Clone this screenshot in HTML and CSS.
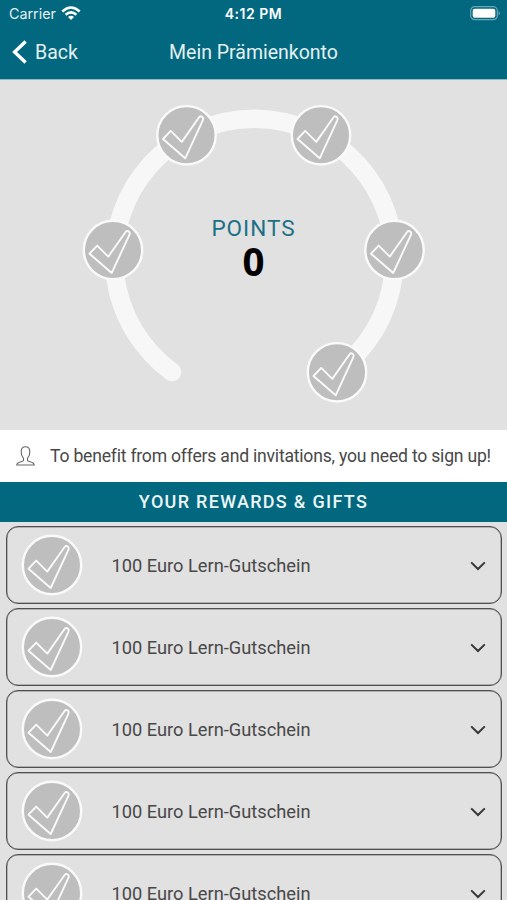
FILE: index.html
```
<!DOCTYPE html>
<html lang="en">
<head>
<meta charset="utf-8">
<title>Mein Prämienkonto</title>
<link rel="stylesheet" href="styles.css">
</head>
<body>
<svg class="defs" aria-hidden="true">
  <symbol id="badge" viewBox="-31 -31 62 62">
    <circle r="29.2" fill="#bebebe" stroke="#fafafa" stroke-width="2.4"/>
    <path d="M-23.5 3.7L-15.8-4.4L-4.7 6.6L12.6-18Q14-19.7 15.8-18.4Q17.3-17.2 16.5-15.4L-1.3 23Z" fill="none" stroke="#fafafa" stroke-width="1.9" stroke-linejoin="round"/>
  </symbol>
  <symbol id="chevron" viewBox="0 0 16 10">
    <path d="M1.2 1.4L8 8L14.8 1.4" fill="none" stroke="#363636" stroke-width="2"/>
  </symbol>
</svg>
<header class="top">
  <div class="status">
    <span class="carrier">Carrier
      <svg width="20" height="15" viewBox="0 0 20 15" fill="none" stroke="#fff" stroke-width="2.6"><path d="M1.3 5.5Q10-2.5 18.7 5.5M4.6 8.8Q10 4.1 15.4 8.8"/><path d="M7 11Q10 8.5 13 11L10 14Z" fill="#fff" stroke="none"/></svg>
    </span>
    <span class="time">4:12 PM</span>
    <svg class="battery" width="31" height="15" viewBox="0 0 31 15"><rect x=".7" y=".7" width="26.6" height="13" rx="4" fill="none" stroke="#6ba7b7" stroke-width="1.2"/><rect x="2.7" y="2.7" width="22.6" height="9" rx="2" fill="#fff"/><path d="M28.6 4.8Q31.2 7.2 28.6 9.6Z" fill="#6ba7b7"/></svg>
  </div>
  <nav class="nav">
    <span class="back"><svg width="16" height="24" viewBox="0 0 16 24"><path d="M13.6 1.5L2.6 12L13.6 22.5" fill="none" stroke="#fff" stroke-width="3.4"/></svg>Back</span>
    <h1>Mein Prämienkonto</h1>
  </nav>
</header>
<section class="gauge">
  <svg class="ring" width="507" height="350" viewBox="0 80 507 350">
    <path d="M172 372A140 140 0 1 1 336.500 372" fill="none" stroke="#f7f7f7" stroke-width="18.600" stroke-linecap="round"/>
    <use href="#badge" x="155.500" y="104.300" width="62" height="62"/>
    <use href="#badge" x="290" y="104.300" width="62" height="62"/>
    <use href="#badge" x="82" y="219" width="62" height="62"/>
    <use href="#badge" x="363.500" y="219" width="62" height="62"/>
    <use href="#badge" x="306" y="341.300" width="62" height="62"/>
  </svg>
  <div class="score"><span class="label">POINTS</span><strong>0</strong></div>
</section>
<section class="notice">
  <svg width="19" height="20" viewBox="0 0 19 20" fill="none" stroke="#686868" stroke-width="1.100" stroke-linejoin="round"><path d="M7.500 12.300C5.500 10 5 7.500 5.200 5.200C5.500-.7 13.500-.7 13.800 5.200C14 7.500 13.500 10 11.500 12.300V14.500C12.200 16 18.300 15.500 18.300 19H.7C.7 15.500 6.800 16 7.500 14.500Z"/></svg>
  <p>To benefit from offers and invitations, you need to sign up!</p>
</section>
<h2>YOUR REWARDS &amp; GIFTS</h2>
<main class="rewards">
  <article class="reward"><svg class="badge"><use href="#badge"/></svg><span>100 Euro Lern-Gutschein</span><svg class="chevron"><use href="#chevron"/></svg></article>
  <article class="reward"><svg class="badge"><use href="#badge"/></svg><span>100 Euro Lern-Gutschein</span><svg class="chevron"><use href="#chevron"/></svg></article>
  <article class="reward"><svg class="badge"><use href="#badge"/></svg><span>100 Euro Lern-Gutschein</span><svg class="chevron"><use href="#chevron"/></svg></article>
  <article class="reward"><svg class="badge"><use href="#badge"/></svg><span>100 Euro Lern-Gutschein</span><svg class="chevron"><use href="#chevron"/></svg></article>
  <article class="reward"><svg class="badge"><use href="#badge"/></svg><span>100 Euro Lern-Gutschein</span><svg class="chevron"><use href="#chevron"/></svg></article>
</main>
</body>
</html>
```
FILE: styles.css
```
* { box-sizing: border-box; }
body {
  margin: 0;
  height: 900px;
  overflow: hidden;
  display: flex;
  flex-direction: column;
  background: #e1e1e1;
  color: #484848;
  font-family: Roboto, sans-serif;
}
body > * { flex-shrink: 0; }
svg { display: block; }
h1, h2, p { margin: 0; font-weight: 400; }
.defs { position: absolute; width: 0; height: 0; }
.top {
  height: 80px;
  background: #02687f;
  border-bottom: 1px solid #8fb9c4;
  color: #e5f0f2;
}
.status {
  height: 27px;
  padding: 0 6px 0 9px;
  display: grid;
  grid-template-columns: 1fr auto 1fr;
  align-items: center;
  font-family: Inter, sans-serif;
  font-size: 14px;
}
.carrier { display: flex; align-items: center; gap: 5px; font-size: 14.3px; }
.time { font-weight: 600; color: #fff; letter-spacing: .5px; padding-right: 3px; white-space: nowrap; }
.battery { justify-self: end; }
.nav {
  height: 51px;
  padding: 0 13px;
  display: grid;
  grid-template-columns: 1fr auto 1fr;
  align-items: center;
}
.back { display: flex; align-items: center; gap: 6px; font-size: 19.5px; }
.back svg { margin: -2px 1px 0 -1px; }
h1 { font-size: 19.5px; }
.gauge { height: 350px; display: grid; }
.ring, .score { grid-area: 1 / 1; }
.score {
  display: flex;
  flex-direction: column;
  align-items: center;
  padding-top: 134px;
}
.label { font-size: 22.5px; line-height: 28px; letter-spacing: 1px; color: #1b7087; }
.score strong { font-family: "Noto Sans", sans-serif; font-size: 38.5px; line-height: 39px; color: #000; }
.notice {
  height: 52px;
  padding-left: 16px;
  display: flex;
  align-items: center;
  gap: 15px;
  background: #fff;
  font-size: 17.6px;
  letter-spacing: -.22px;
  white-space: nowrap;
}
.notice svg { margin-top: -1px; }
h2 {
  height: 40px;
  line-height: 40px;
  text-align: center;
  background: #02687f;
  color: #edf5f6;
  font-size: 18px;
  font-weight: 500;
  letter-spacing: 1.3px;
}
.rewards { padding: 4px 5px 0 6px; display: flex; flex-direction: column; gap: 4px; }
.reward {
  height: 78px;
  border: 1px solid #505050;
  box-shadow: inset 0 0 0 .5px #808080;
  border-radius: 12px;
  display: flex;
  align-items: center;
  padding: 0 15px 0 14px;
  font-size: 18.25px;
}
.badge { width: 62px; height: 62px; }
.reward span { margin: 0 0 0 28.5px; flex: 1; }
.chevron { width: 16px; height: 10px; margin-top: 2px; }
```
